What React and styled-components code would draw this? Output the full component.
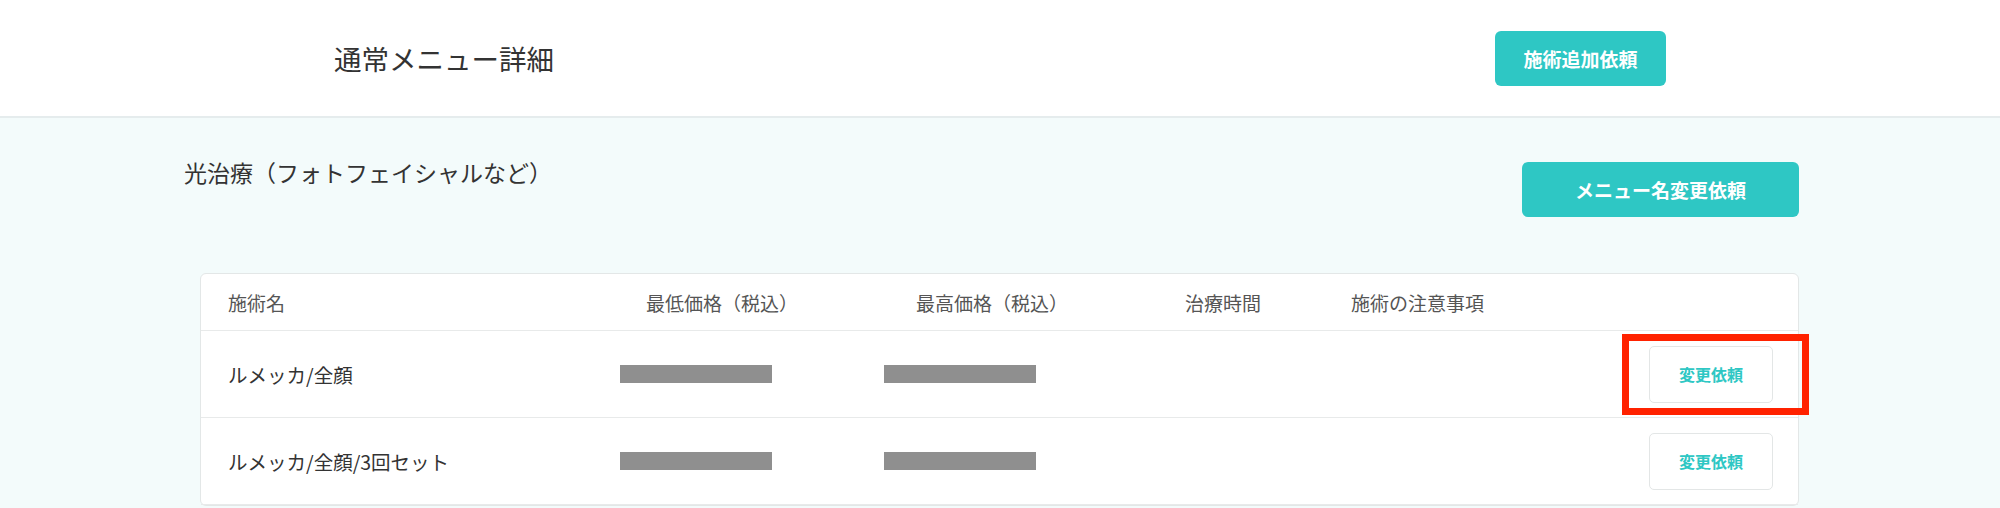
import React from 'react';
import styled, { createGlobalStyle } from "styled-components";

const GlobalStyle = createGlobalStyle`
    body {
        margin:0;
        background:#f3fbfb;
        font-family:"Noto Sans CJK JP","Noto Sans",sans-serif;
        color:#333;
    }
`
const Header = styled.header`
    height:116px;
    background:#fff;
    border-bottom:2px solid #e5eced;
    display:flex;
    align-items:center;
    justify-content:space-between;
    padding:0 334px;
`
const PageTitle = styled.h1`
    margin:0;
    font-size:27.5px;
    font-weight:400;
    color:#333;
`
const PrimaryButton = styled.button`
    font-family:inherit;
    background:#2ec7c4;
    color:#fff;
    border:none;
    border-radius:6px;
    font-weight:700;
    font-size:19px;
    height:${p => p.h || 55}px;
    width:${p => p.w}px;
    margin-top:${p => p.mt || 0}px;
    padding:0;
`
const Main = styled.main`
    padding:38px 201px 0 184px;
`
const SectionHead = styled.div`
    display:flex;
    justify-content:space-between;
    align-items:flex-start;
`
const SectionTitle = styled.h2`
    margin:0;
    font-size:23px;
    font-weight:400;
    line-height:33px;
`
const Card = styled.div`
    margin:56px 0 0 16px;
    background:#fff;
    border:1px solid #e3e7e7;
    border-radius:6px;
`
const Row = styled.div`
    display:grid;
    grid-template-columns:419px 264px 301px 166px 1fr;
    align-items:center;
    height:${p => p.h}px;
    border-bottom:1px solid #e8eaea;
`
const HeadCell = styled.div`
    font-size:19px;
    color:#555;
    padding-left:${p => p.pl || 0}px;
`
const NameCell = styled.div`
    font-size:19.5px;
    color:#333;
    padding-left:27px;
`
const Masked = styled.div`
    width:152px;
    height:18px;
    background:#8f8f8f;
`
const ActionCell = styled.div`
    display:flex;
    justify-content:flex-end;
    padding-right:25px;
`
const ButtonWrap = styled.div`
    position:relative;
`
const OutlineButton = styled.button`
    font-family:inherit;
    width:124px;
    height:57px;
    background:#fff;
    border:1px solid #e3e6e6;
    border-radius:5px;
    color:#2ec7c4;
    font-weight:700;
    font-size:16px;
    padding:0;
`
const Highlight = styled.div`
    position:absolute;
    left:-27px;
    right:-36px;
    top:-12px;
    bottom:-12px;
    border:7px solid #ff2200;
    pointer-events:none;
`

const rows = [
    { name: 'ルメッカ/全顔', marked: true },
    { name: 'ルメッカ/全顔/3回セット' },
];

function App() {
    return <>
      <GlobalStyle/>
      <Header>
        <PageTitle>通常メニュー詳細</PageTitle>
        <PrimaryButton w={171} h={55}>施術追加依頼</PrimaryButton>
      </Header>
      <Main>
        <SectionHead>
          <SectionTitle>光治療（フォトフェイシャルなど）</SectionTitle>
          <PrimaryButton w={277} h={55} mt={6}>メニュー名変更依頼</PrimaryButton>
        </SectionHead>
        <Card>
          <Row h={56}>
            <HeadCell pl={27}>施術名</HeadCell>
            <HeadCell pl={26}>最低価格（税込）</HeadCell>
            <HeadCell pl={32}>最高価格（税込）</HeadCell>
            <HeadCell>治療時間</HeadCell>
            <HeadCell>施術の注意事項</HeadCell>
          </Row>
          {rows.map(r => (
            <Row h={86} key={r.name}>
              <NameCell>{r.name}</NameCell>
              <Masked/>
              <Masked/>
              <div/>
              <ActionCell>
                <ButtonWrap>
                  <OutlineButton>変更依頼</OutlineButton>
                  {r.marked && <Highlight/>}
                </ButtonWrap>
              </ActionCell>
            </Row>
          ))}
        </Card>
      </Main>
    </>;
}

export default App;
